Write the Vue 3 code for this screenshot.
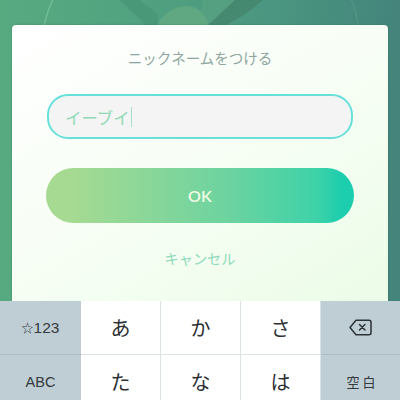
<script setup>
const rows = [
  [{ star: true, t: '123', side: true }, { t: 'あ' }, { t: 'か' }, { t: 'さ' }, { icon: true, side: true }],
  [{ t: 'ABC', side: true, small: true }, { t: 'た' }, { t: 'な' }, { t: 'は' }, { t: '空白', side: true, small: true, space: true }],
]
</script>

<template>
  <div class="screen">
    <svg class="backdrop" width="400" height="30" viewBox="0 0 400 30">
      <defs>
        <filter id="soft" x="-10%" y="-10%" width="120%" height="120%">
          <feGaussianBlur stdDeviation="0.7" />
        </filter>
      </defs>
      <g filter="url(#soft)">
        <path d="M44 26 C46 16 49 8 53 -1" fill="none" stroke="#72bd98" stroke-width="1.4" />
        <path d="M351 -1 C355 8 357 16 358 26" fill="none" stroke="#549a88" stroke-width="1" />
        <path d="M203 -1 H236 L216 26 H198 Z" fill="#55a080" />
        <path d="M118 -1 H138 L158 14 V26 H146 C138 16 128 8 118 -1 Z" fill="#4a9877" />
        <path d="M236 -1 H264 C250 12 238 19 224 26 H207 Z" fill="#44896f" />
        <path d="M157 26 C162 15 172 7 186 6 C198 6 206 15 209 26 Z" fill="#60a882" />
      </g>
    </svg>

    <section class="card">
      <h1 class="title">ニックネームをつける</h1>
      <div class="field">
        <span class="value">イーブイ</span><span class="caret"></span>
      </div>
      <button class="ok">OK</button>
      <div class="cancel">キャンセル</div>
    </section>

    <div class="keyboard">
      <template v-for="(row, r) in rows" :key="r">
        <div
          v-for="(k, i) in row"
          :key="i"
          class="key"
          :class="{ side: k.side, small: k.small, space: k.space }"
        >
          <svg v-if="k.icon" width="23" height="17" viewBox="0 0 23 17">
            <path d="M7 1.2 H20 a2 2 0 0 1 2 2 V13.8 a2 2 0 0 1 -2 2 H7 L1 8.5 Z" fill="none" stroke="#2c3236" stroke-width="1.5" stroke-linejoin="round" />
            <path d="M10.5 5.5 L16 11 M16 5.5 L10.5 11" stroke="#2c3236" stroke-width="1.5" stroke-linecap="round" />
          </svg>
          <template v-else>
            <span v-if="k.star" class="star">☆</span>{{ k.t }}
          </template>
        </div>
      </template>
    </div>
  </div>
</template>

<style>
html, body { margin: 0; padding: 0; }
</style>

<style scoped>
.screen {
  position: relative;
  width: 400px;
  height: 400px;
  overflow: hidden;
  padding-top: 25px;
  box-sizing: border-box;
  background: linear-gradient(90deg, #57aa80 0%, #51a280 35%, #4a9580 70%, #44847b 100%);
  font-family: "Noto Sans CJK JP", "Noto Sans", sans-serif;
}
.backdrop {
  position: absolute;
  left: 0;
  top: 0;
}
.card {
  position: relative;
  box-sizing: border-box;
  height: 276px;
  margin: 0 12px;
  padding: 22px 34px 0;
  border-radius: 4px 4px 0 0;
  background: linear-gradient(150deg, #ffffff 0%, #f8fef6 45%, #ecfce8 100%);
  display: flex;
  flex-direction: column;
  align-items: center;
  box-shadow: 0 0 2px rgba(40, 80, 60, 0.4);
}
.title {
  margin: 0;
  font-size: 14.5px;
  line-height: 22px;
  font-weight: 400;
  color: #8ea5a0;
}
.field {
  box-sizing: border-box;
  align-self: stretch;
  margin: 25px 1px 0;
  height: 45px;
  border: 2px solid #68e0da;
  border-radius: 21px;
  background: #f4f4f4;
  padding-left: 16px;
  display: flex;
  align-items: center;
}
.value {
  font-size: 16.4px;
  color: #8fdab4;
}
.caret {
  width: 1px;
  height: 20px;
  margin-left: 1px;
  background: #a8dcd0;
}
.ok {
  align-self: stretch;
  height: 55px;
  margin-top: 29px;
  border: 0;
  border-radius: 28px;
  background: linear-gradient(90deg, #a6da92 8%, #6bd3a0 60%, #3ed2a8 88%, #1ccdae 96%);
  color: #f3fbe6;
  font-family: "Lato", "Noto Sans", sans-serif;
  font-size: 16px;
  font-weight: 600;
  letter-spacing: 0.2px;
}
.cancel {
  margin-top: 24px;
  font-size: 14.2px;
  line-height: 22px;
  color: #8edabb;
}
.keyboard {
  position: relative;
  display: grid;
  grid-template-columns: 81px 80px 80px 80px 79px;
  grid-auto-rows: 54px;
  height: 99px;
  overflow: hidden;
  background: #fff;
}
.key {
  box-sizing: border-box;
  display: flex;
  align-items: center;
  justify-content: center;
  background: #fff;
  color: #2c3033;
  font-size: 20px;
  border-right: 1px solid #dce3e5;
  border-bottom: 1px solid #dce3e5;
}
.key.side {
  background: #bfced4;
  border-right: 0;
  border-bottom-color: #adbcc2;
  font-family: "Liberation Sans", "Noto Sans CJK JP", sans-serif;
  font-size: 15.5px;
  color: #33393d;
}
.star {
  font-family: "Noto Sans CJK JP", sans-serif;
  font-size: 12px;
}
.key.small {
  font-size: 14.5px;
}
.key.space {
  font-family: "Noto Sans CJK JP", sans-serif;
  font-size: 13px;
  letter-spacing: 3px;
  padding-left: 4px;
}
</style>
